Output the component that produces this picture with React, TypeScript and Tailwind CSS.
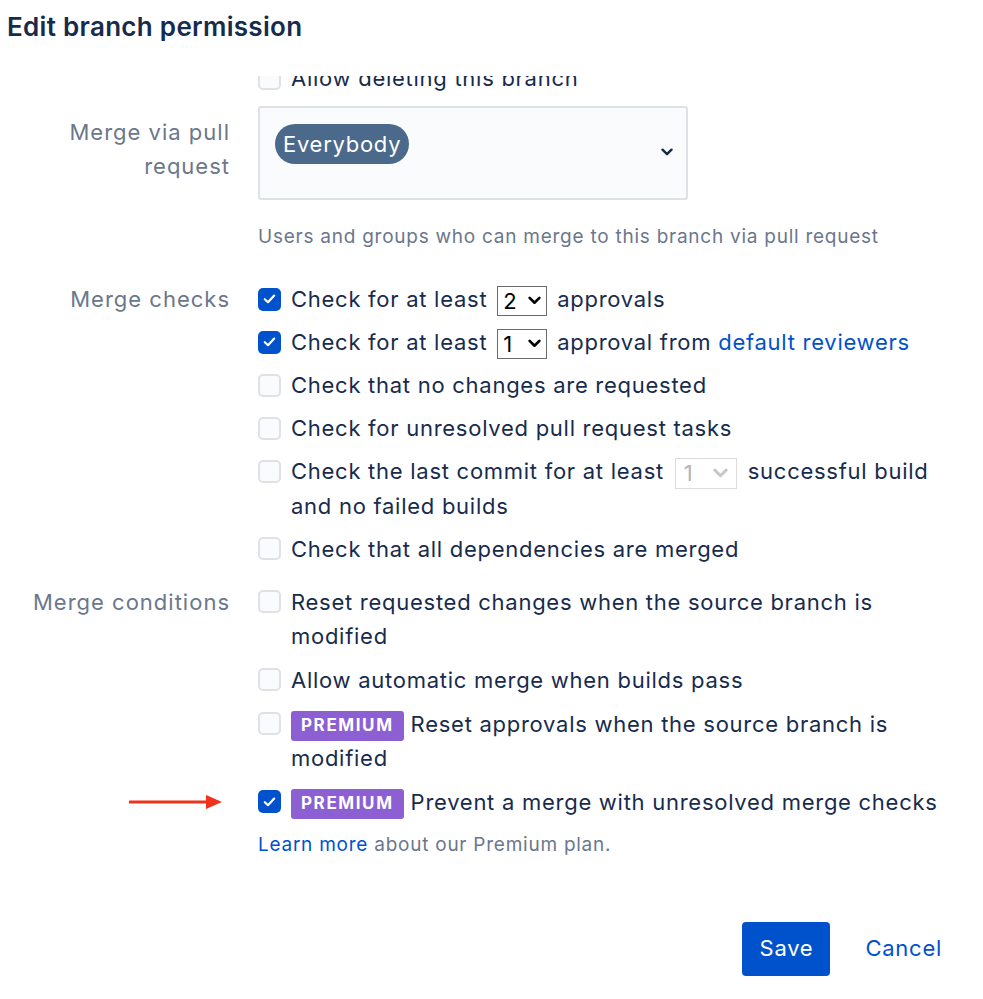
import React from "react";

const font = { fontFamily: 'Inter, "Noto Sans", sans-serif' };

function Checkbox({ checked }: { checked?: boolean }) {
  if (checked) {
    return (
      <span className="flex h-[23px] w-[23px] items-center justify-center rounded-[5px] bg-[#0052cc]">
        <svg width="13" height="10" viewBox="0 0 13 10" fill="none">
          <path d="M1.8 5.2l3.2 3 6.2-6.6" stroke="white" strokeWidth="2.2" strokeLinecap="round" strokeLinejoin="round" />
        </svg>
      </span>
    );
  }
  return <span className="block h-[23px] w-[23px] rounded-[5px] border-2 border-[#dfe1e6] bg-[#fafbfc]" />;
}

function Chevron({ color = "#172b4d", size = 12 }: { color?: string; size?: number }) {
  return (
    <svg width={size} height={size * 0.7} viewBox="0 0 12 8" fill="none">
      <path d="M1.5 1.5L6 6l4.5-4.5" stroke={color} strokeWidth="2.4" strokeLinecap="round" strokeLinejoin="round" />
    </svg>
  );
}

function MiniSelect({ value, disabled }: { value: string; disabled?: boolean }) {
  if (disabled) {
    return (
      <span className="mx-[4px] inline-flex h-[31px] w-[62px] items-center justify-between border border-[#dcdcdc] bg-white pl-[8px] pr-[8px] align-middle tracking-normal text-[#b3b3b3]">
        <span>{value}</span>
        <Chevron color="#c8c8c8" size={15} />
      </span>
    );
  }
  return (
    <span className="mx-[3px] inline-flex h-[30px] w-[50px] items-center justify-between border border-[#6b6b6b] bg-white pl-[5px] pr-[5px] align-middle tracking-normal text-black">
      <span>{value}</span>
      <Chevron color="#000" size={13} />
    </span>
  );
}

function CheckRow({ checked, children }: { checked?: boolean; children: React.ReactNode }) {
  return (
    <div className="flex items-start gap-[10px]">
      <span className="flex h-[34px] items-center">
        <Checkbox checked={checked} />
      </span>
      <div className="flex-1 leading-[34px] text-[#172b4d]">{children}</div>
    </div>
  );
}

function Premium() {
  return (
    <span className="mr-[7px] inline-flex h-[30px] items-center rounded-[3px] bg-[#8c5fd3] px-[10px] align-middle text-[17px] font-bold leading-none tracking-[1.6px] text-white">
      PREMIUM
    </span>
  );
}

function Section({ label, labelClass = "", children, className = "" }: { label?: React.ReactNode; labelClass?: string; children: React.ReactNode; className?: string }) {
  return (
    <div className={"flex " + className}>
      <div className={"w-[230px] shrink-0 text-right leading-[34px] tracking-[1px] text-[#6b778c] " + labelClass}>{label}</div>
      <div className="ml-[28px] flex-1">{children}</div>
    </div>
  );
}

export default function App() {
  return (
    <div className="h-[999px] w-[983px] overflow-hidden bg-white text-[22px] tracking-[0.73px]" style={font}>
      <div className="h-[76px] pl-[7px] pt-[9px]">
        <h2 className="text-[26px] font-semibold leading-[36px] tracking-[0.3px] text-[#172b4d]">Edit branch permission</h2>
      </div>

      <div className="overflow-hidden pr-[36px]">
        <div className="mt-[-15px]">
          <Section>
            <CheckRow>Allow deleting this branch</CheckRow>
          </Section>

          <Section className="mt-[11px]" labelClass="pt-[9px]" label={<>Merge via pull<br />request</>}>
            <div className="flex h-[94px] w-[430px] items-start justify-between rounded-[3px] border-2 border-[#dfe1e6] bg-[#fafbfc] pl-[15px] pr-[13px] pt-[16px]">
              <span className="flex h-[40px] items-center rounded-full bg-[#4b6a8b] px-[8px] text-white">Everybody</span>
              <span className="mt-[24px]">
                <Chevron size={12} />
              </span>
            </div>
            <p className="mt-[24px] text-[19px] leading-[26px] tracking-[0.75px] text-[#6b778c]">
              Users and groups who can merge to this branch via pull request
            </p>
          </Section>

          <Section className="mt-[32px]" label="Merge checks">
            <div className="flex flex-col gap-[9px]">
              <CheckRow checked>
                Check for at least <MiniSelect value="2" /> approvals
              </CheckRow>
              <CheckRow checked>
                Check for at least <MiniSelect value="1" /> approval from{" "}
                <a className="text-[#0052cc]">default reviewers</a>
              </CheckRow>
              <CheckRow>Check that no changes are requested</CheckRow>
              <CheckRow>Check for unresolved pull request tasks</CheckRow>
              <CheckRow>
                Check the last commit for at least <MiniSelect value="1" disabled /> successful build and no failed
                builds
              </CheckRow>
              <CheckRow>Check that all dependencies are merged</CheckRow>
            </div>
          </Section>

          <Section className="mt-[19px]" label="Merge conditions">
            <div className="flex flex-col gap-[10px]">
              <CheckRow>Reset requested changes when the source branch is modified</CheckRow>
              <CheckRow>Allow automatic merge when builds pass</CheckRow>
              <CheckRow>
                <Premium />
                Reset approvals when the source branch is modified
              </CheckRow>
            </div>
          </Section>

          <Section
            className="mt-[10px]"
            label={
              <span className="flex h-[34px] items-center justify-end pr-[8px]">
                <svg width="93" height="16" viewBox="0 0 93 16">
                  <line x1="0" y1="8" x2="80" y2="8" stroke="#f0321c" strokeWidth="3" />
                  <path d="M77 1l16 7-16 7z" fill="#f0321c" />
                </svg>
              </span>
            }
          >
            <CheckRow checked>
              <Premium />
              Prevent a merge with unresolved merge checks
            </CheckRow>
            <p className="mt-[13px] text-[19px] leading-[26px] tracking-[0.75px] text-[#6b778c]">
              <a className="text-[#0052cc]">Learn more</a> about our Premium plan.
            </p>
          </Section>

          <div className="mt-[64px] flex items-center justify-end pr-[5px]">
            <button className="h-[54px] w-[88px] rounded-[4px] bg-[#0052cc] text-[22px] text-white">Save</button>
            <button className="ml-[35px] text-[22px] text-[#0052cc]">Cancel</button>
          </div>
        </div>
      </div>
    </div>
  );
}
